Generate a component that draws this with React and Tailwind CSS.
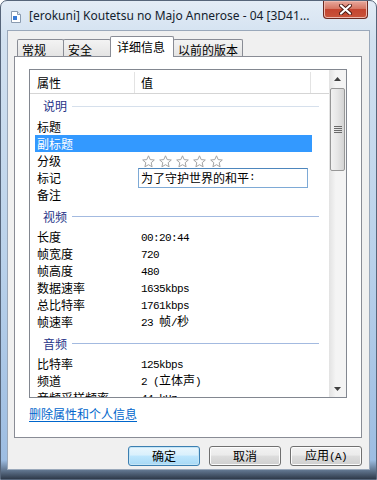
import React from 'react';

const SECTIONS = [
  {
    title: '说明',
    first: true,
    rows: [
      { label: '标题', value: '' },
      { label: '副标题', value: '', selected: true },
      { label: '分级', kind: 'stars' },
      { label: '标记', kind: 'edit', value: '为了守护世界的和平:' },
      { label: '备注', value: '' },
    ],
  },
  {
    title: '视频',
    rows: [
      { label: '长度', value: '00:20:44' },
      { label: '帧宽度', value: '720' },
      { label: '帧高度', value: '480' },
      { label: '数据速率', value: '1635kbps' },
      { label: '总比特率', value: '1761kbps' },
      { label: '帧速率', value: '23 帧/秒' },
    ],
  },
  {
    title: '音频',
    rows: [
      { label: '比特率', value: '125kbps' },
      { label: '频道', value: '2 (立体声)' },
      { label: '音频采样频率', value: '44 kHz' },
    ],
  },
];

const TABS = [
  { name: '常规', w: 'w-[47px]' },
  { name: '安全', w: 'w-[48px]' },
  { name: '详细信息', w: 'w-[64px]', active: true },
  { name: '以前的版本', w: 'w-[70px]' },
];

// ascii runs get the narrow mono font, like SimSun's half-width glyphs
const Val = ({ text }) =>
  text
    .split(/([\x00-\x7f]+)/)
    .filter(Boolean)
    .map((p, i) =>
      /^[\x00-\x7f]+$/.test(p) ? (
        <span key={i} className="font-['Liberation_Mono',monospace] text-[11px] tracking-[-0.6px]">
          {p}
        </span>
      ) : (
        <span key={i}>{p}</span>
      )
    );

const Star = () => (
  <svg width="13" height="13" viewBox="0 0 13 13">
    <path
      d="M6.5 0.8 L8.2 4.6 L12.3 5 L9.2 7.7 L10.1 11.8 L6.5 9.7 L2.9 11.8 L3.8 7.7 L0.7 5 L4.8 4.6 Z"
      fill="#ffffff"
      stroke="#a3a3a3"
      strokeWidth="1"
      strokeLinejoin="round"
    />
  </svg>
);

const Row = ({ row }) => (
  <div
    className={`mx-[5px] flex h-[17px] w-[277px] items-center leading-[17px] ${
      row.selected ? 'bg-[#3399ff] text-white' : 'text-black'
    }`}
  >
    <div className="w-[99px] shrink-0 overflow-hidden whitespace-nowrap pl-[2px]">{row.label}</div>
    {row.kind === 'stars' ? (
      <div className="flex gap-[4px] pl-[8px] pt-[1px]">
        {[0, 1, 2, 3, 4].map((i) => (
          <Star key={i} />
        ))}
      </div>
    ) : row.kind === 'edit' ? (
      <div className="relative z-10 ml-[4px] flex h-[20px] w-[170px] shrink-0 items-center border border-[#7eaad6] border-t-[#4d86bd] bg-white pl-[2px]">
        <Val text={row.value} />
      </div>
    ) : (
      <div className="whitespace-nowrap pl-[7px]">
        <Val text={row.value} />
      </div>
    )}
  </div>
);

const Group = ({ title, first }) => (
  <div className={`flex items-center pl-[13px] pr-[10px] ${first ? 'h-[24px]' : 'h-[25px] pt-[2px]'}`}>
    <span className="text-[#1e3287]">{title}</span>
    <div className={`ml-[5px] h-px flex-1 ${first ? 'bg-[#d6e0ec]' : 'bg-[#a3bae0]'}`} />
  </div>
);

const Scrollbar = () => (
  <div className="flex w-[17px] shrink-0 flex-col bg-[linear-gradient(90deg,#e2e2e2,#f4f4f4_40%,#f4f4f4)]">
    <div className="flex h-[18px] items-center justify-center">
      <svg width="7" height="4" viewBox="0 0 7 4">
        <path d="M3.5 0 L7 4 L0 4 Z" fill="#404040" />
      </svg>
    </div>
    <div className="mx-[1px] flex h-[83px] items-center justify-center rounded-[2px] border border-[#979797] bg-[linear-gradient(90deg,#f2f2f2,#e6e6e6_50%,#d4d4d4)]">
      <div className="flex flex-col gap-[1px]">
        {[0, 1, 2, 3].map((i) => (
          <div key={i} className="h-px w-[8px] bg-[#6a6a6a]" />
        ))}
      </div>
    </div>
    <div className="flex-1" />
    <div className="flex h-[17px] items-center justify-center">
      <svg width="7" height="4" viewBox="0 0 7 4">
        <path d="M0 0 L7 0 L3.5 4 Z" fill="#404040" />
      </svg>
    </div>
  </div>
);

const Btn = ({ children, primary }) => (
  <button
    className={`h-[20px] w-[72px] rounded-[3px] border text-[12px] leading-none text-black ${
      primary
        ? 'border-[#3c7fb1] bg-[linear-gradient(#eaf6fd_0%,#d9f0fc_45%,#bee6fd_50%,#a7d9f5_100%)] shadow-[inset_0_0_0_1px_#c4e5f6]'
        : 'border-[#707070] bg-[linear-gradient(#f2f2f2_0%,#ebebeb_45%,#dddddd_50%,#cfcfcf_100%)] shadow-[inset_0_0_0_1px_#fcfcfc]'
    }`}
  >
    {children}
  </button>
);

export default function App() {
  return (
    <div className="h-[480px] w-[377px] overflow-hidden rounded-t-[7px] border border-[#56657a] bg-[linear-gradient(180deg,#e3ecf6_0%,#d2e1f0_8%,#b9d1ea_55%,#9dbde2_96%,#2f3a4a_100%)] font-['Noto_Sans_CJK_SC',sans-serif] text-[12px]">
      {/* title bar */}
      <div className="flex h-[29px] items-start">
        <div className="mt-[10px] ml-[10px] flex items-center">
          <svg width="10" height="12" viewBox="0 0 10 12">
            <path d="M0.5 0.5 H6.5 L9.5 3.5 V11.5 H0.5 Z" fill="#ffffff" stroke="#8a9bb0" />
            <path d="M6.5 0.5 V3.5 H9.5" fill="#e5ebf2" stroke="#8a9bb0" />
            <rect x="2" y="5" width="4" height="4" fill="#3a7bd5" />
          </svg>
        </div>
        <div className="mt-[6px] ml-[8px] whitespace-nowrap font-['Noto_Sans',sans-serif] text-[12px] leading-[17px] text-[#141e2e]">
          [erokuni] Koutetsu no Majo Annerose - 04 [3D41...
        </div>
        <div className="mr-[8px] ml-auto flex h-[18px] w-[45px] shrink-0 items-center justify-center rounded-b-[4px] border border-t-0 border-[#6b2a22] bg-[linear-gradient(#e8a99d_0%,#d67663_45%,#c44530_50%,#c8533a_100%)] shadow-[inset_0_0_0_1px_#eeb8ad]">
          <svg width="13" height="11" viewBox="0 0 13 11">
            <path d="M2 1.5 L11 9.5 M11 1.5 L2 9.5" stroke="#4a1a14" strokeWidth="4" strokeLinecap="round" />
            <path d="M2 1.5 L11 9.5 M11 1.5 L2 9.5" stroke="#ffffff" strokeWidth="2.2" strokeLinecap="round" />
          </svg>
        </div>
      </div>

      {/* client area */}
      <div className="mx-[6px] flex h-[440px] flex-col border border-[#9aa8ba] bg-[#f0f0f0]">
        {/* tabs */}
        <div className="relative z-10 mt-[5px] flex h-[20px] items-end pl-[9px]">
          {TABS.map((t, i) =>
            t.active ? (
              <div
                key={t.name}
                className={`${t.w} -mb-px -ml-px h-[21px] shrink-0 rounded-t-[2px] border border-b-0 border-[#898c95] bg-white pl-[6px] leading-[19px] text-black`}
              >
                {t.name}
              </div>
            ) : (
              <div
                key={t.name}
                className={`${t.w} ${i > 0 ? '-ml-px' : ''} h-[17px] shrink-0 rounded-t-[2px] border border-b-0 border-[#898c95] bg-[linear-gradient(#f3f3f3,#e4e4e4)] pt-[1px] pl-[4px] leading-[17px] text-black`}
              >
                {t.name}
              </div>
            )
          )}
        </div>

        {/* panel */}
        <div className="mr-[7px] ml-[6px] flex h-[382px] flex-col border border-[#898c95] bg-white">
          <div className="mx-[14px] mt-[12px] flex h-[329px] border border-[#828790] bg-white">
            <div className="flex-1 overflow-hidden">
              <div className="flex h-[24px] border-b border-[#d5d5d5] pt-[2px] leading-[21px]">
                <div className="w-[105px] border-r border-[#e3e3e3] pl-[7px]">属性</div>
                <div className="w-[176px] border-r border-[#e3e3e3] pl-[6px]">值</div>
                <div className="flex-1" />
              </div>
              {SECTIONS.map((s) => (
                <div key={s.title}>
                  <Group title={s.title} first={s.first} />
                  {s.rows.map((r) => (
                    <Row key={r.label} row={r} />
                  ))}
                </div>
              ))}
            </div>
            <Scrollbar />
          </div>
          <div className="mt-[7px] ml-[14px] leading-[17px]">
            <span className="cursor-pointer text-[#0066cc] underline underline-offset-[2px]">删除属性和个人信息</span>
          </div>
        </div>

        {/* buttons */}
        <div className="mt-[8px] mr-[7px] flex justify-end gap-[9px]">
          <Btn primary>确定</Btn>
          <Btn>取消</Btn>
          <Btn>
            应用<Val text="(A)" />
          </Btn>
        </div>
      </div>
    </div>
  );
}
